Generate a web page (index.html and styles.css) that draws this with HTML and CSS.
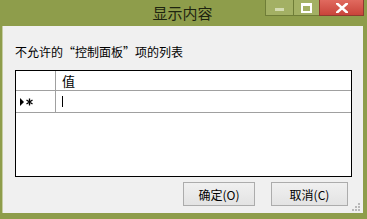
FILE: index.html
```html
<!DOCTYPE html>
<html lang="zh-CN">
<head>
    <meta charset="UTF-8">
    <title>显示内容</title>
    <link rel="stylesheet" href="styles.css">
</head>
<body>
    <div class="window">
        <div class="titlebar">
            <div class="title">显示内容</div>
            <div class="caption-buttons">
                <div class="cap-btn cap-min"><span class="min-bar"></span></div>
                <div class="cap-btn cap-max"><span class="max-box"></span></div>
                <div class="cap-btn cap-close">
                    <svg width="12" height="10" viewBox="0 0 12 10">
                        <path d="M1 0.5 L11 9.5 M11 0.5 L1 9.5" stroke="#fff" stroke-width="2.6" stroke-linecap="square"/>
                    </svg>
                </div>
            </div>
        </div>
        <div class="client">
            <div class="label">不允许的“控制面板”项的列表</div>
            <div class="grid">
                <div class="row header-row">
                    <div class="row-head"></div>
                    <div class="cell">值</div>
                </div>
                <div class="row edit-row">
                    <div class="row-head">
                        <svg width="14" height="8" viewBox="0 0 14 8">
                            <path d="M0 0 L4 4 L0 8 Z" fill="#000"/>
                            <path d="M9.5 0.5 V7.5 M6.5 2 L12.5 6 M12.5 2 L6.5 6" stroke="#000" stroke-width="1.3"/>
                        </svg>
                    </div>
                    <div class="cell"><span class="caret"></span></div>
                </div>
            </div>
            <div class="actions">
                <button class="btn">确定(O)</button>
                <button class="btn">取消(C)</button>
            </div>
            <div class="grip">
                <svg width="10" height="10" viewBox="0 0 10 10">
                    <rect x="7" y="1" width="2" height="2" fill="#b9b9b9"/>
                    <rect x="4" y="4" width="2" height="2" fill="#b9b9b9"/>
                    <rect x="7" y="4" width="2" height="2" fill="#b9b9b9"/>
                    <rect x="1" y="7" width="2" height="2" fill="#b9b9b9"/>
                    <rect x="4" y="7" width="2" height="2" fill="#b9b9b9"/>
                    <rect x="7" y="7" width="2" height="2" fill="#b9b9b9"/>
                </svg>
            </div>
        </div>
    </div>
</body>
</html>
```

FILE: styles.css
```css
body {
    margin: 0;
    font-family: "Noto Sans CJK SC", "Liberation Sans", sans-serif;
    background: #8e9d4b;
}
.window {
    width: 367px;
    height: 219px;
    display: flex;
    flex-direction: column;
    background: #8e9d4b;
    box-sizing: border-box;
    padding: 0 4px 6px 2px;
}
.titlebar {
    height: 26px;
    position: relative;
    display: flex;
    justify-content: center;
    align-items: center;
}
.title {
    font-size: 15px;
    color: #1e2410;
    margin-top: -2px;
}
.caption-buttons {
    position: absolute;
    top: 0;
    right: -1px;
    display: flex;
}
.cap-btn {
    height: 16px;
    display: flex;
    justify-content: center;
    align-items: center;
    box-sizing: border-box;
    border: 1px solid #6f7d37;
    border-top: none;
}
.cap-min {
    width: 28px;
    background: #a3b064;
    border-right: none;
}
.min-bar {
    width: 9px;
    height: 3px;
    margin-top: 4px;
    background: #d4dbb2;
}
.cap-max {
    width: 26px;
    background: #a3b064;
    border-right: none;
}
.max-box {
    width: 7px;
    height: 5px;
    border: 2px solid #fff;
    border-top-width: 3px;
}
.cap-close {
    width: 45px;
    background: linear-gradient(#e06a5f, #c9443a);
    border-color: #8f3a2f;
}
.client {
    flex: 1;
    background: #f0f0f0;
    border-left: 1px solid #c6cda2;
    position: relative;
    display: flex;
    flex-direction: column;
    padding: 0 11px 0 12px;
}
.label {
    font-size: 12px;
    color: #000;
    margin-top: 18px;
    line-height: 16px;
}
.grid {
    margin-top: 10px;
    height: 105px;
    border: 1px solid #000;
    background: #fff;
}
.row {
    display: flex;
    border-bottom: 1px solid #a0a0a0;
    height: 19px;
}
.edit-row {
    height: 21px;
}
.row-head {
    width: 40px;
    border-right: 1px solid #a0a0a0;
    display: flex;
    align-items: center;
    padding-left: 4px;
    box-sizing: border-box;
}
.cell {
    flex: 1;
    font-size: 13px;
    line-height: 19px;
    padding-left: 6px;
    display: flex;
    align-items: center;
}
.caret {
    width: 1px;
    height: 11px;
    background: #000;
}
.actions {
    display: flex;
    justify-content: flex-end;
    gap: 16px;
    margin-top: 5px;
    margin-right: 4px;
}
.btn {
    width: 72px;
    height: 24px;
    font-family: "Noto Sans CJK SC", "Liberation Sans", sans-serif;
    font-size: 12px;
    color: #000;
    background: linear-gradient(#f0f0f0, #e3e3e3);
    border: 1px solid #acacac;
    padding: 0;
}
.btn + .btn {
    width: 77px;
}
.grip {
    position: absolute;
    right: 2px;
    bottom: 1px;
    line-height: 0;
}
```
